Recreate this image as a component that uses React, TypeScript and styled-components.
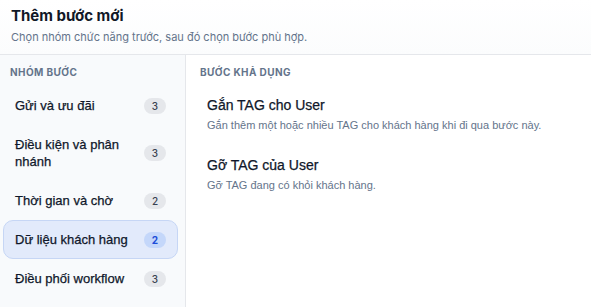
import React from "react";
import styled, { createGlobalStyle } from "styled-components";

const Global = createGlobalStyle`
  html, body { margin: 0; padding: 0; background: #ffffff; }
  * { box-sizing: border-box; }
`;

const Shell = styled.div`
  width: 591px;
  height: 307px;
  display: flex;
  flex-direction: column;
  background: #ffffff;
  overflow: hidden;
  font-family: Inter, "Noto Sans", sans-serif;
`;

const Header = styled.header`
  height: 55px;
  padding: 7px 11px 0;
  border-bottom: 1px solid #e5e7eb;
  background: linear-gradient(180deg, #ffffff 0%, #fbfcfd 100%);
  display: flex;
  flex-direction: column;
  gap: 5px;
`;

const Title = styled.h1`
  margin: 0;
  font-size: 15px;
  line-height: 18px;
  font-weight: 700;
  color: #111827;
`;

const Subtitle = styled.p`
  margin: 0;
  font-size: 11px;
  line-height: 14px;
  color: #64748b;
`;

const Body = styled.div`
  flex: 1;
  display: grid;
  grid-template-columns: 186px 1fr;
  min-height: 0;
`;

const Sidebar = styled.aside`
  background: #f8fafc;
  border-right: 1px solid #e5e7eb;
  padding: 11px 7px 0 3px;
  display: flex;
  flex-direction: column;
`;

const SectionLabel = styled.div<{ $indent: number }>`
  font-size: 10px;
  line-height: 12px;
  font-weight: 700;
  letter-spacing: 0.4px;
  text-transform: uppercase;
  color: #64748b;
  padding-left: ${(p) => p.$indent}px;
  margin-bottom: 8px;
`;

const GroupItem = styled.button<{ $active?: boolean }>`
  display: flex;
  align-items: center;
  justify-content: space-between;
  gap: 8px;
  width: 100%;
  padding: 10px 11px 10px 11px;
  border-radius: 10px;
  border: 1px solid ${(p) => (p.$active ? "#c6d6f5" : "transparent")};
  background: ${(p) => (p.$active ? "#e2eafb" : "transparent")};
  text-align: left;
  cursor: pointer;
  font-family: "Liberation Sans", Arial, sans-serif;
`;

const GroupName = styled.span`
  font-size: 13px;
  line-height: 17px;
  color: #0f172a;
  -webkit-text-stroke: 0.25px #0f172a;
  max-width: 120px;
`;

const Count = styled.span<{ $active?: boolean }>`
  flex: none;
  width: 22px;
  height: 16px;
  border-radius: 8px;
  display: inline-flex;
  align-items: center;
  justify-content: center;
  font-family: Inter, sans-serif;
  font-size: 10px;
  font-weight: ${(p) => (p.$active ? 700 : 500)};
  background: ${(p) => (p.$active ? "#c4d7fa" : "#e5e7eb")};
  color: ${(p) => (p.$active ? "#1d4ed8" : "#374151")};
`;

const Main = styled.main`
  padding: 11px 10px 0 11px;
  display: flex;
  flex-direction: column;
`;

const StepList = styled.div`
  display: flex;
  flex-direction: column;
  gap: 3px;
`;

const StepCard = styled.button`
  display: flex;
  flex-direction: column;
  gap: 4px;
  padding: 10px 10px;
  border: none;
  border-radius: 10px;
  background: transparent;
  text-align: left;
  cursor: pointer;
  font-family: "Liberation Sans", Arial, sans-serif;
`;

const StepTitle = styled.span`
  font-size: 14px;
  line-height: 18px;
  color: #0f172a;
  -webkit-text-stroke: 0.25px #0f172a;
`;

const StepDesc = styled.span`
  font-size: 11px;
  line-height: 15px;
  color: #64748b;
`;

const groups = [
  { name: "Gửi và ưu đãi", count: 3 },
  { name: "Điều kiện và phân nhánh", count: 3 },
  { name: "Thời gian và chờ", count: 2 },
  { name: "Dữ liệu khách hàng", count: 2, active: true },
  { name: "Điều phối workflow", count: 3 },
];

const steps = [
  {
    title: "Gắn TAG cho User",
    desc: "Gắn thêm một hoặc nhiều TAG cho khách hàng khi đi qua bước này.",
  },
  { title: "Gỡ TAG của User", desc: "Gỡ TAG đang có khỏi khách hàng." },
];

export default function App() {
  return (
    <>
      <Global />
      <Shell>
        <Header>
          <Title>Thêm bước mới</Title>
          <Subtitle>Chọn nhóm chức năng trước, sau đó chọn bước phù hợp.</Subtitle>
        </Header>
        <Body>
          <Sidebar>
            <SectionLabel $indent={7}>Nhóm bước</SectionLabel>
            {groups.map((g) => (
              <GroupItem key={g.name} $active={g.active}>
                <GroupName>{g.name}</GroupName>
                <Count $active={g.active}>{g.count}</Count>
              </GroupItem>
            ))}
          </Sidebar>
          <Main>
            <SectionLabel $indent={3}>Bước khả dụng</SectionLabel>
            <StepList>
              {steps.map((s) => (
                <StepCard key={s.title}>
                  <StepTitle>{s.title}</StepTitle>
                  <StepDesc>{s.desc}</StepDesc>
                </StepCard>
              ))}
            </StepList>
          </Main>
        </Body>
      </Shell>
    </>
  );
}
